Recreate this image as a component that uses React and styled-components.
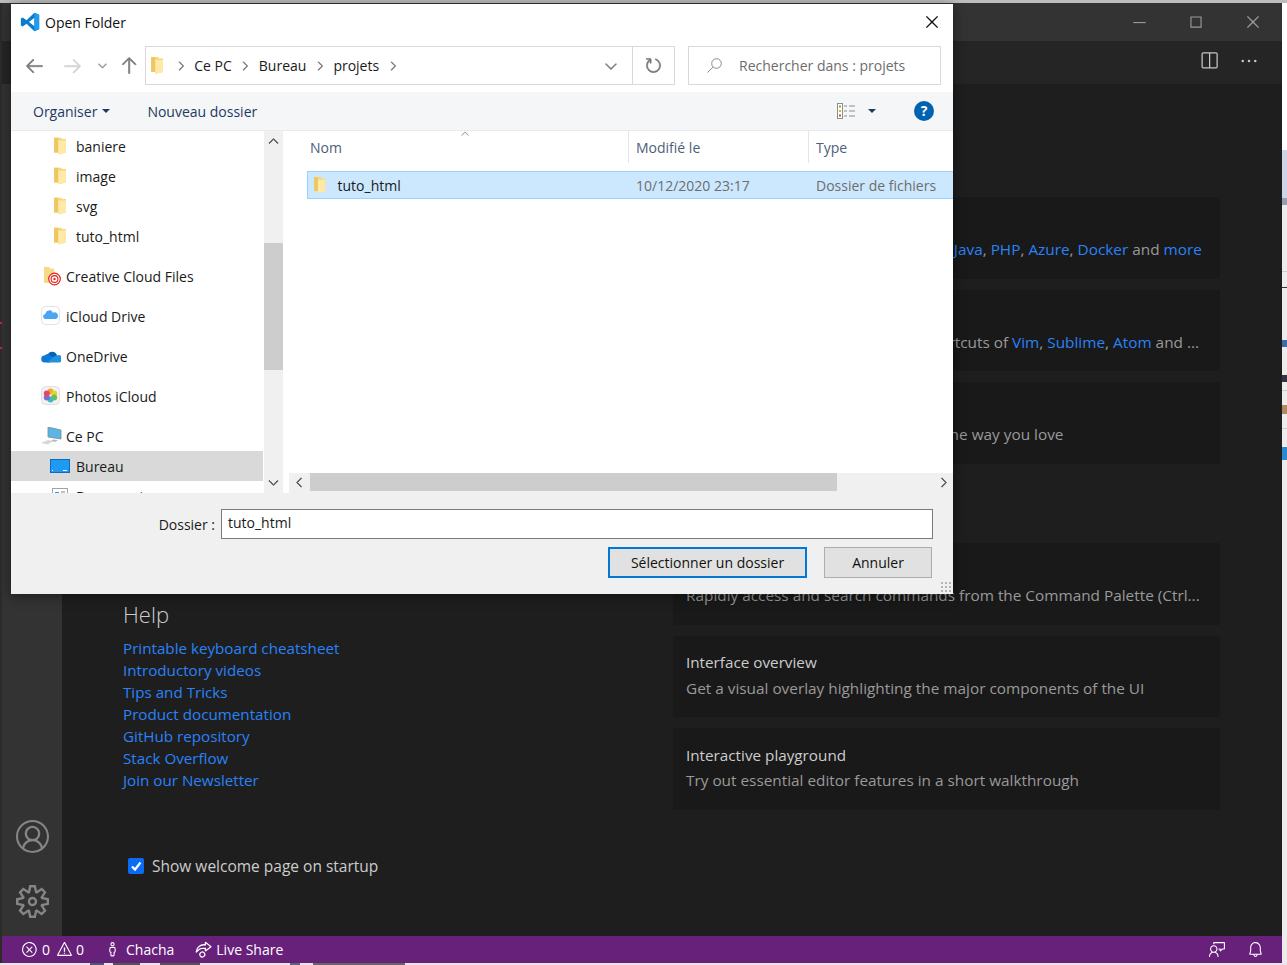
import React from 'react'
import styled, { createGlobalStyle } from 'styled-components'
import {
  VscAccount,
  VscSettingsGear,
  VscError,
  VscWarning,
  VscBell,
  VscLiveShare,
  VscFeedback,
  VscPerson,
  VscSplitHorizontal,
  VscEllipsis,
  VscChromeClose,
  VscChromeMaximize,
  VscChromeMinimize,
  VscRefresh,
  VscArrowLeft,
  VscArrowRight,
  VscArrowUp,
  VscChevronDown,
  VscChevronRight,
  VscChevronUp,
  VscChevronLeft,
} from 'react-icons/vsc'

const FolderIcon = ({ size = 17 }) => (
  <svg width={size * 0.72} height={size} viewBox="0 0 12 17">
    <path d="M0 0h7l1 1.5h4V15l-8 2V15H0z" fill="#f5d77e" />
    <path d="M4 3h8v12l-8 2z" fill="#ffe9a6" />
    <path d="M0 0h4v15H0z" fill="#eec763" />
  </svg>
)

const CloudFolderIcon = () => (
  <svg width="20" height="22" viewBox="0 0 20 22">
    <path d="M3 2h5l1 1.5h4V18H3z" fill="#f6da88" />
    <circle cx="13.500" cy="14" r="5.800" fill="#fff" stroke="#e2231a" strokeWidth="1.200" />
    <circle cx="13.500" cy="14" r="3.400" fill="none" stroke="#e2231a" strokeWidth="1.100" />
    <circle cx="13.500" cy="14" r="1.200" fill="#e2231a" />
  </svg>
)

const ICloudIcon = () => (
  <svg width="20" height="20" viewBox="0 0 20 20">
    <rect x="0.5" y="0.5" width="18" height="18" rx="4" fill="#fff" stroke="#e2e2e2" />
    <path d="M4 13a2.6 2.6 0 0 1 .4-5.1A4 4 0 0 1 12 6.700a3.300 3.300 0 0 1 3 6.300z" fill="#4ba5f5" />
  </svg>
)

const OneDriveIcon = () => (
  <svg width="20" height="14" viewBox="0 0 20 14">
    <path d="M7 5a5 5 0 0 1 9 1.500L13 12 5 6z" fill="#0364b8" />
    <path d="M4 13.500a3.500 3.500 0 0 1-.5-7A5 5 0 0 1 7 5l6 4-4 4.500z" fill="#0f78d4" />
    <path d="M16 6.500a3.600 3.600 0 0 1 2.800 7H6l7-6z" fill="#1d93e0" />
  </svg>
)

const PhotosIcon = () => (
  <svg width="20" height="20" viewBox="0 0 20 20">
    <rect x="0.5" y="0.5" width="18" height="18" rx="4" fill="#f2f2f2" stroke="#e0e0e0" />
    <circle cx="9.500" cy="5.500" r="3" fill="#f5a623" />
    <circle cx="13.200" cy="7.500" r="3" fill="#e2d13a" />
    <circle cx="13.200" cy="11.500" r="3" fill="#6cc04a" />
    <circle cx="9.500" cy="13.500" r="3" fill="#3fb8c9" />
    <circle cx="5.800" cy="11.500" r="3" fill="#7a6fd0" />
    <circle cx="5.800" cy="7.500" r="3" fill="#e2486a" />
  </svg>
)

const PcIcon = () => (
  <svg width="21" height="18" viewBox="0 0 21 18">
    <path d="M7 0l13 3v9L7 10z" fill="#5cb5e6" stroke="#7d8a94" strokeWidth="0.8" />
    <path d="M0 16l7-3 5 1-5 3.500z" fill="#d5d8da" />
    <path d="M12 12.500l5 .8-3 1.700-4-.8z" fill="#b8bcc0" />
  </svg>
)

const DesktopIcon = () => (
  <svg width="20" height="14" viewBox="0 0 20 14">
    <rect x="0.500" y="0.500" width="19" height="13" fill="#1e9bf0" stroke="#0a6cc4" />
    <path d="M2 11.500h1M13 11.500h4" stroke="#fff" />
  </svg>
)

const DocumentsIcon = () => (
  <svg width="16" height="16" viewBox="0 0 16 16">
    <rect x="0.500" y="0.500" width="15" height="15" fill="#fff" stroke="#9aa4ad" />
    <path d="M3 4h4v3H3z" fill="#4a90d0" />
    <path d="M9 4h4M9 7h4M3 10h10M3 13h10" stroke="#7d8a94" />
  </svg>
)

const VSCodeLogo = () => (
  <svg width="20" height="20" viewBox="0 0 24 24">
    <path
      fillRule="evenodd"
      d="M17.300 1 7.800 10 3.300 6.700 1 7.800v8.400l2.300 1.100 4.500-3.300 9.500 9 5.700-2.400V3.400zM17.300 7l-6.500 5 6.500 5z"
      fill="#0a7ccb"
    />
    <path d="M17.300 1l5.700 2.400v17.200L17.300 23z" fill="#1f9cf0" />
  </svg>
)

const SearchIcon = () => (
  <svg width="17" height="17" viewBox="0 0 17 17" fill="none" stroke="#8a8a8a">
    <circle cx="10.500" cy="6.500" r="4.800" />
    <path d="M7 10.200 1.500 15.500" />
  </svg>
)

const ViewIcon = () => (
  <svg width="19" height="16" viewBox="0 0 19 16" fill="none">
    <rect x="0.500" y="0.500" width="5" height="15" fill="#fff" stroke="#8d8d8d" />
    <path d="M2 2.500h2v2H2z" fill="#7fa650" />
    <path d="M2 7h2v2H2z" fill="#d9b23c" />
    <path d="M2 11.500h2v2H2z" fill="#c8502e" />
    <path d="M7 3h3M12 3h6M7 8h3M12 8h6M7 13h3M12 13h6" stroke="#8d8d8d" />
  </svg>
)

const Caret = styled.span`
  width: 0;
  height: 0;
  border-left: 4px solid transparent;
  border-right: 4px solid transparent;
  border-top: 4px solid #1e3a5f;
`

const navItems = [
  [
    { label: 'baniere', icon: <FolderIcon />, nested: true },
    { label: 'image', icon: <FolderIcon />, nested: true },
    { label: 'svg', icon: <FolderIcon />, nested: true },
    { label: 'tuto_html', icon: <FolderIcon />, nested: true },
  ],
  [{ label: 'Creative Cloud Files', icon: <CloudFolderIcon /> }],
  [{ label: 'iCloud Drive', icon: <ICloudIcon /> }],
  [{ label: 'OneDrive', icon: <OneDriveIcon /> }],
  [{ label: 'Photos iCloud', icon: <PhotosIcon /> }],
  [
    { label: 'Ce PC', icon: <PcIcon /> },
    { label: 'Bureau', icon: <DesktopIcon />, nested: true, active: true },
    { label: 'Documents', icon: <DocumentsIcon />, nested: true },
  ],
]

const helpLinks = [
  'Printable keyboard cheatsheet',
  'Introductory videos',
  'Tips and Tricks',
  'Product documentation',
  'GitHub repository',
  'Stack Overflow',
  'Join our Newsletter',
]

const App = () => (
  <>
    <GlobalStyle />
    <Screen>
      <Window>
        <TitleBar>
          <WinButton><VscChromeMinimize /></WinButton>
          <WinButton><VscChromeMaximize /></WinButton>
          <WinButton><VscChromeClose /></WinButton>
        </TitleBar>
        <TabBar>
          <TabIcon><VscSplitHorizontal /></TabIcon>
          <TabIcon><VscEllipsis /></TabIcon>
        </TabBar>
        <Main>
          <ActivityBar>
            <ActivityIcon><VscAccount /></ActivityIcon>
            <ActivityIcon><VscSettingsGear /></ActivityIcon>
          </ActivityBar>
          <Welcome>
            <LeftColumn>
              <HelpTitle>Help</HelpTitle>
              <LinkList>
                {helpLinks.map((link) => (
                  <li key={link}><Link>{link}</Link></li>
                ))}
              </LinkList>
              <StartupRow>
                <CheckBox>
                  <svg width="12" height="12" viewBox="0 0 12 12" fill="none">
                    <path d="M2 6.500 5 9.500 10.500 2.500" stroke="#fff" strokeWidth="2.200" />
                  </svg>
                </CheckBox>
                Show welcome page on startup
              </StartupRow>
            </LeftColumn>
            <RightColumn>
              <CardGroup>
                <Card>
                  <CardTitle>Tools and languages</CardTitle>
                  <CardText>
                    Install support for <Link>JavaScript</Link>, <Link>Python</Link>, <Link>Java</Link>, <Link>PHP</Link>, <Link>Azure</Link>, <Link>Docker</Link> and <Link>more</Link>
                  </CardText>
                </Card>
                <Card>
                  <CardTitle>Settings and keybindings</CardTitle>
                  <CardText>
                    Install the settings and keyboard shortcuts of <Link>Vim</Link>, <Link>Sublime</Link>, <Link>Atom</Link> and ...
                  </CardText>
                </Card>
                <Card>
                  <CardTitle>Color theme</CardTitle>
                  <CardText>Make the editor and your code look the way you love</CardText>
                </Card>
              </CardGroup>
              <CardGroup>
                <Card>
                  <CardTitle>Find and run all commands</CardTitle>
                  <CardText>Rapidly access and search commands from the Command Palette (Ctrl...</CardText>
                </Card>
                <Card>
                  <CardTitle>Interface overview</CardTitle>
                  <CardText>Get a visual overlay highlighting the major components of the UI</CardText>
                </Card>
                <Card>
                  <CardTitle>Interactive playground</CardTitle>
                  <CardText>Try out essential editor features in a short walkthrough</CardText>
                </Card>
              </CardGroup>
            </RightColumn>
          </Welcome>
        </Main>
        <StatusBar>
          <StatusItem $gap={4}><VscError />0</StatusItem>
          <StatusItem $gap={3} $left={2}><VscWarning />0</StatusItem>
          <StatusItem $gap={5} $left={16}><VscPerson />Chacha</StatusItem>
          <StatusItem $gap={4} $left={17}><VscLiveShare />Live Share</StatusItem>
          <StatusRight>
            <StatusItem><VscFeedback /></StatusItem>
            <StatusItem><VscBell /></StatusItem>
          </StatusRight>
        </StatusBar>
      </Window>

      <Dialog>
        <DialogTitle>
          <VSCodeLogo />
          <span>Open Folder</span>
          <DialogClose><VscChromeClose /></DialogClose>
        </DialogTitle>

        <AddressRow>
          <NavArrow $color="#7b7b7b"><VscArrowLeft /></NavArrow>
          <NavArrow $color="#d4d4d4"><VscArrowRight /></NavArrow>
          <NavSmall><VscChevronDown /></NavSmall>
          <NavArrow $color="#7b7b7b"><VscArrowUp /></NavArrow>
          <AddressBox>
            <AddressFolder><FolderIcon /></AddressFolder>
            <Crumb><VscChevronRight /></Crumb>
            <span>Ce PC</span>
            <Crumb><VscChevronRight /></Crumb>
            <span>Bureau</span>
            <Crumb><VscChevronRight /></Crumb>
            <span>projets</span>
            <Crumb><VscChevronRight /></Crumb>
            <AddressEnd>
              <VscChevronDown />
              <RefreshCell><VscRefresh /></RefreshCell>
            </AddressEnd>
          </AddressBox>
          <SearchBox>
            <SearchIcon />
            <span>Rechercher dans : projets</span>
          </SearchBox>
        </AddressRow>

        <Toolbar>
          <ToolText>Organiser <Caret /></ToolText>
          <ToolText>Nouveau dossier</ToolText>
          <ToolRight>
            <ViewIcon />
            <Caret />
            <HelpBadge>?</HelpBadge>
          </ToolRight>
        </Toolbar>

        <Browser>
          <NavPane>
            <NavList>
              {navItems.map((group) => (
                <NavGroup key={group[0].label}>
                  {group.map((item) => (
                    <NavRow key={item.label} $nested={item.nested} $active={item.active}>
                      <NavIcon $nested={item.nested}>{item.icon}</NavIcon>
                      {item.label}
                    </NavRow>
                  ))}
                </NavGroup>
              ))}
            </NavList>
            <VScroll>
              <VscChevronUp />
              <VThumb />
              <VscChevronDown />
            </VScroll>
          </NavPane>

          <FilePane>
            <FileHeader>
              <HeaderCell $width={340} $first>Nom<SortMark><VscChevronUp /></SortMark></HeaderCell>
              <HeaderCell $width={180}>Modifié le</HeaderCell>
              <HeaderCell $width={145} $last>Type</HeaderCell>
            </FileHeader>
            <FileRow>
              <FileName><FolderIcon size={16} />tuto_html</FileName>
              <FileDate>10/12/2020 23:17</FileDate>
              <FileType>Dossier de fichiers</FileType>
            </FileRow>
            <HScroll>
              <VscChevronLeft />
              <HTrack><HThumb /></HTrack>
              <VscChevronRight />
            </HScroll>
          </FilePane>
        </Browser>

        <DialogFooter>
          <FolderLine>
            <label>Dossier :</label>
            <FolderInput>tuto_html</FolderInput>
          </FolderLine>
          <ButtonLine>
            <DialogButton $primary $width={199}>Sélectionner un dossier</DialogButton>
            <DialogButton $width={108}>Annuler</DialogButton>
          </ButtonLine>
          <Grip />
        </DialogFooter>
      </Dialog>
    </Screen>
  </>
)

export default App

const GlobalStyle = createGlobalStyle`
  html, body {
    margin: 0;
    background: #fff;
    overflow: hidden;
  }
  * {
    box-sizing: border-box;
  }
`

/* the desktop peeking out around the window: only thin strips stay visible */
const Screen = styled.div`
  position: relative;
  width: 1287px;
  height: 965px;
  padding: 3px 5px 2px 2px;
  font-family: 'Open Sans', 'Noto Sans', sans-serif;
  box-shadow: inset 0 3px 0 #bdbdbd;
  background:
    linear-gradient(
        to right,
        #e6e6e6 90px,
        #4a5a70 90px 104px,
        #e6e6e6 104px 113px,
        #555 113px 140px,
        #e6e6e6 140px 160px,
        #555 160px 200px,
        #e6e6e6 200px 290px,
        #567 290px 300px,
        #e6e6e6 300px 313px,
        #666 313px 405px,
        #e6e6e6 405px
      )
      left bottom / 100% 2px no-repeat,
    linear-gradient(
        #2b2b2b 322px,
        #c8262c 322px 324px,
        #2b2b2b 324px 347px,
        #c8262c 347px 349px,
        #2b2b2b 349px
      )
      left top / 2px 100% no-repeat,
    linear-gradient(
        #fff 150px,
        #cdd6e6 150px 198px,
        #98a0b0 198px 205px,
        #ececec 205px 271px,
        #ccc 271px 272px,
        #ececec 272px 287px,
        #333 287px 288px,
        #ececec 288px 340px,
        #3a6ea5 340px 347px,
        #ececec 347px 375px,
        #334 375px 382px,
        #ececec 382px 390px,
        #ccc 390px 391px,
        #ececec 391px 405px,
        #b08a60 405px 414px,
        #ececec 414px 428px,
        #ccc 428px 429px,
        #ececec 429px 447px,
        #2a8ad0 447px 460px,
        #ececec 460px
      )
      right top / 5px 100% no-repeat,
    #fff;
`

const Window = styled.div`
  height: 960px;
  display: flex;
  flex-direction: column;
  background: #1e1e1e;
`

const TitleBar = styled.div`
  height: 38px;
  flex: none;
  background: #333;
  display: flex;
  justify-content: flex-end;
  padding-right: 1px;
`

const WinButton = styled.div`
  width: 57px;
  display: flex;
  align-items: center;
  justify-content: center;
  color: #9a9a9a;
  font-size: 18px;
`

const TabBar = styled.div`
  height: 43px;
  flex: none;
  background: #252526;
  display: flex;
  justify-content: flex-end;
  align-items: center;
  gap: 20px;
  padding: 0 23px 3px 0;
`

const TabIcon = styled.div`
  display: flex;
  color: #c5c5c5;
  font-size: 20px;
`

const Main = styled.div`
  flex: 1;
  display: flex;
  min-height: 0;
`

const ActivityBar = styled.div`
  width: 60px;
  flex: none;
  background: #333;
  display: flex;
  flex-direction: column;
  justify-content: flex-end;
  align-items: center;
  gap: 32px;
  padding-bottom: 18px;
`

const ActivityIcon = styled.div`
  display: flex;
  color: #858585;
  font-size: 33px;
`

const Welcome = styled.div`
  flex: 1;
  display: grid;
  grid-template-columns: 550px 547px;
  padding-left: 61px;
`

const LeftColumn = styled.div`
  padding-top: 515px;
`

const HelpTitle = styled.h2`
  margin: 0 0 8px;
  font-size: 22px;
  line-height: 30px;
  font-weight: 300;
  color: #cccccc;
`

const LinkList = styled.ul`
  list-style: none;
  margin: 0;
  padding: 0;
  font-size: 15.2px;
  line-height: 22px;
`

const Link = styled.span`
  color: #2a82f7;
`

const StartupRow = styled.div`
  margin-top: 64px;
  margin-left: 5px;
  display: flex;
  align-items: center;
  gap: 8px;
  font-size: 15.5px;
  line-height: 22px;
  color: #cccccc;
`

const CheckBox = styled.span`
  width: 16px;
  height: 16px;
  border-radius: 2px;
  background: #0a6cf5;
  display: flex;
  align-items: center;
  justify-content: center;
`

const RightColumn = styled.div`
  padding-top: 113px;
  display: flex;
  flex-direction: column;
  gap: 79.5px;
`

const CardGroup = styled.div`
  display: flex;
  flex-direction: column;
  gap: 11px;
`

const Card = styled.div`
  height: 81.5px;
  padding: 15.5px 13px 0;
  background: #191919;
`

const CardTitle = styled.div`
  font-size: 15.25px;
  line-height: 22px;
  color: #cccccc;
`

const CardText = styled.div`
  margin-top: 3.5px;
  font-size: 15.35px;
  line-height: 22px;
  color: #9a9a9a;
  white-space: nowrap;
`

const StatusBar = styled.div`
  height: 27px;
  flex: none;
  background: #68217a;
  display: flex;
  align-items: center;
  padding: 0 14.5px 0 19px;
  color: #fff;
  font-size: 14px;
`

const StatusItem = styled.div`
  display: flex;
  align-items: center;
  gap: ${(p) => p.$gap || 0}px;
  margin-left: ${(p) => p.$left || 0}px;
  margin-right: 4px;

  svg {
    font-size: 17px;
  }
`

const StatusRight = styled.div`
  margin-left: auto;
  display: flex;
  gap: 17px;
`

const Dialog = styled.div`
  position: absolute;
  left: 11px;
  top: 4px;
  width: 942px;
  height: 590px;
  background: #fff;
  display: flex;
  flex-direction: column;
  font-size: 14px;
  color: #1a1a1a;
  box-shadow: 0 2px 12px rgba(0, 0, 0, 0.45);
`

const DialogTitle = styled.div`
  height: 36px;
  flex: none;
  display: flex;
  align-items: center;
  gap: 5px;
  padding-left: 9px;
  color: #111;
`

const DialogClose = styled.span`
  margin-left: auto;
  margin-right: 12px;
  display: flex;
  font-size: 18px;
`

const AddressRow = styled.div`
  height: 52px;
  flex: none;
  display: flex;
  align-items: flex-start;
  padding-top: 6px;
`

const NavArrow = styled.span`
  width: 29px;
  height: 39px;
  margin-left: 9px;
  display: flex;
  align-items: center;
  justify-content: center;
  color: ${(p) => p.$color};
  font-size: 21px;

  svg {
    stroke: currentColor;
    stroke-width: 0.5;
  }
`

const NavSmall = styled.span`
  width: 15px;
  height: 39px;
  display: flex;
  align-items: center;
  justify-content: center;
  color: #8a8a8a;
  font-size: 13px;
  margin: 0 -5px 0 8px;

  svg {
    stroke: currentColor;
    stroke-width: 0.8;
  }
`

const AddressBox = styled.div`
  width: 530px;
  height: 39px;
  margin-left: 2px;
  border: 1px solid #d9d9d9;
  display: flex;
  align-items: center;
  padding-left: 5px;
  gap: 4px;
  color: #1a1a1a;
`

const AddressFolder = styled.span`
  display: flex;
  margin-right: 4px;
`

const Crumb = styled.span`
  display: flex;
  width: 19px;
  justify-content: center;
  font-size: 14px;
  color: #777;

  svg {
    stroke: currentColor;
    stroke-width: 0.8;
  }
`

const AddressEnd = styled.div`
  margin-left: auto;
  height: 100%;
  display: flex;
  align-items: center;
  gap: 12px;
  color: #777;
  font-size: 18px;

  svg {
    stroke: currentColor;
    stroke-width: 0.5;
  }
`

const RefreshCell = styled.span`
  width: 42px;
  height: 100%;
  border-left: 1px solid #d9d9d9;
  display: flex;
  align-items: center;
  justify-content: center;
  color: #777;
  font-size: 19px;
`

const SearchBox = styled.div`
  width: 253px;
  height: 39px;
  margin-left: 13px;
  border: 1px solid #d9d9d9;
  display: flex;
  align-items: center;
  gap: 16px;
  padding-left: 17px;
  color: #6d6d6d;
`

const Toolbar = styled.div`
  height: 39px;
  flex: none;
  background: #f5f6f7;
  border-bottom: 1px solid #eaeaea;
  display: flex;
  align-items: center;
  gap: 37px;
  padding: 0 19px 0 22px;
  color: #1e3a5f;
`

const ToolText = styled.div`
  display: flex;
  align-items: center;
  gap: 5px;
`

const ToolRight = styled.div`
  margin-left: auto;
  display: flex;
  align-items: center;
  gap: 12px;
`

const HelpBadge = styled.span`
  width: 20px;
  height: 20px;
  margin-left: 26px;
  border-radius: 50%;
  background: #0063b1;
  color: #fff;
  font-weight: 700;
  font-size: 14px;
  line-height: 20px;
  text-align: center;
`

const Browser = styled.div`
  flex: 1;
  display: flex;
  min-height: 0;
  overflow: hidden;
`

const NavPane = styled.div`
  width: 272px;
  flex: none;
  display: flex;
`

const NavList = styled.div`
  width: 252px;
  height: 362px;
  overflow: hidden;
`

const NavGroup = styled.div`
  margin-bottom: 10px;
`

const NavRow = styled.div`
  height: 30px;
  display: flex;
  align-items: center;
  padding-left: ${(p) => (p.$nested ? 65 : 55)}px;
  position: relative;
  background: ${(p) => (p.$active ? '#d9d9d9' : 'transparent')};
  color: #1a1a1a;
`

const NavIcon = styled.span`
  position: absolute;
  left: ${(p) => (p.$nested ? 38 : 29)}px;
  top: 50%;
  transform: translateY(-50%);
  width: 22px;
  display: flex;
  justify-content: center;
`

const VScroll = styled.div`
  width: 19px;
  height: 362px;
  margin-left: 1px;
  background: #f0f0f0;
  display: flex;
  flex-direction: column;
  align-items: center;
  padding-top: 3px;
  color: #555;
  font-size: 15px;

  > svg {
    stroke: currentColor;
    stroke-width: 0.8;
  }

  svg:last-child {
    margin-top: auto;
    margin-bottom: 3.5px;
  }
`

const VThumb = styled.div`
  width: 100%;
  height: 127px;
  margin-top: 94px;
  background: #cdcdcd;
`

const FilePane = styled.div`
  flex: 1;
  display: flex;
  flex-direction: column;
  padding-left: 6px;
  position: relative;
`

const FileHeader = styled.div`
  height: 32px;
  flex: none;
  display: flex;
  color: #4c607a;
`

const HeaderCell = styled.div`
  width: ${(p) => p.$width}px;
  padding-left: ${(p) => (p.$first ? 21 : 7)}px;
  border-right: ${(p) => (p.$last ? 0 : '1px solid #e5e5e5')};
  display: flex;
  align-items: center;
  position: relative;
`

const SortMark = styled.span`
  position: absolute;
  left: 170px;
  top: -3px;
  color: #888;
  font-size: 12px;
  display: flex;
`

const FileRow = styled.div`
  height: 28px;
  margin-top: 8px;
  margin-left: 18px;
  display: flex;
  align-items: center;
  background: #cce8ff;
  border: 1px solid #99d1ff;
  border-right: 0;
  color: #6d6d6d;
`

const FileName = styled.div`
  width: 328px;
  padding-left: 6px;
  display: flex;
  align-items: center;
  gap: 12px;
  color: #1a1a1a;
`

const FileDate = styled.div`
  width: 180px;
`

const FileType = styled.div`
  white-space: nowrap;
`

const HScroll = styled.div`
  margin-top: auto;
  height: 20px;
  padding: 0 3px 2px;
  background: #f0f0f0;
  display: flex;
  align-items: center;
  color: #555;
  font-size: 15px;

  > svg {
    stroke: currentColor;
    stroke-width: 0.8;
  }
`

const HTrack = styled.div`
  flex: 1;
  height: 100%;
  padding-left: 3px;
`

const HThumb = styled.div`
  width: 527px;
  height: 100%;
  background: #cdcdcd;
`

const DialogFooter = styled.div`
  height: 101px;
  flex: none;
  background: #f0f0f0;
  padding: 16px 20px 0 0;
  position: relative;
`

const FolderLine = styled.div`
  display: flex;
  align-items: center;
  justify-content: flex-end;
  gap: 6px;
`

const FolderInput = styled.div`
  width: 712px;
  height: 30px;
  background: #fff;
  border: 1px solid #7a7a7a;
  padding-left: 6px;
  line-height: 26px;
`

const ButtonLine = styled.div`
  margin-top: 8px;
  display: flex;
  justify-content: flex-end;
  gap: 17px;
  padding-right: 1px;
`

const DialogButton = styled.div`
  width: ${(p) => p.$width}px;
  height: 31px;
  background: #e1e1e1;
  border: ${(p) => (p.$primary ? '2px solid #0078d7' : '1px solid #adadad')};
  display: flex;
  align-items: center;
  justify-content: center;
  color: #111;
`

const Grip = styled.div`
  position: absolute;
  right: 2px;
  bottom: 2px;
  width: 11px;
  height: 11px;
  background: radial-gradient(circle, #b5b5b5 1.200px, transparent 1.300px) 0 0 / 4px 4px;
`
